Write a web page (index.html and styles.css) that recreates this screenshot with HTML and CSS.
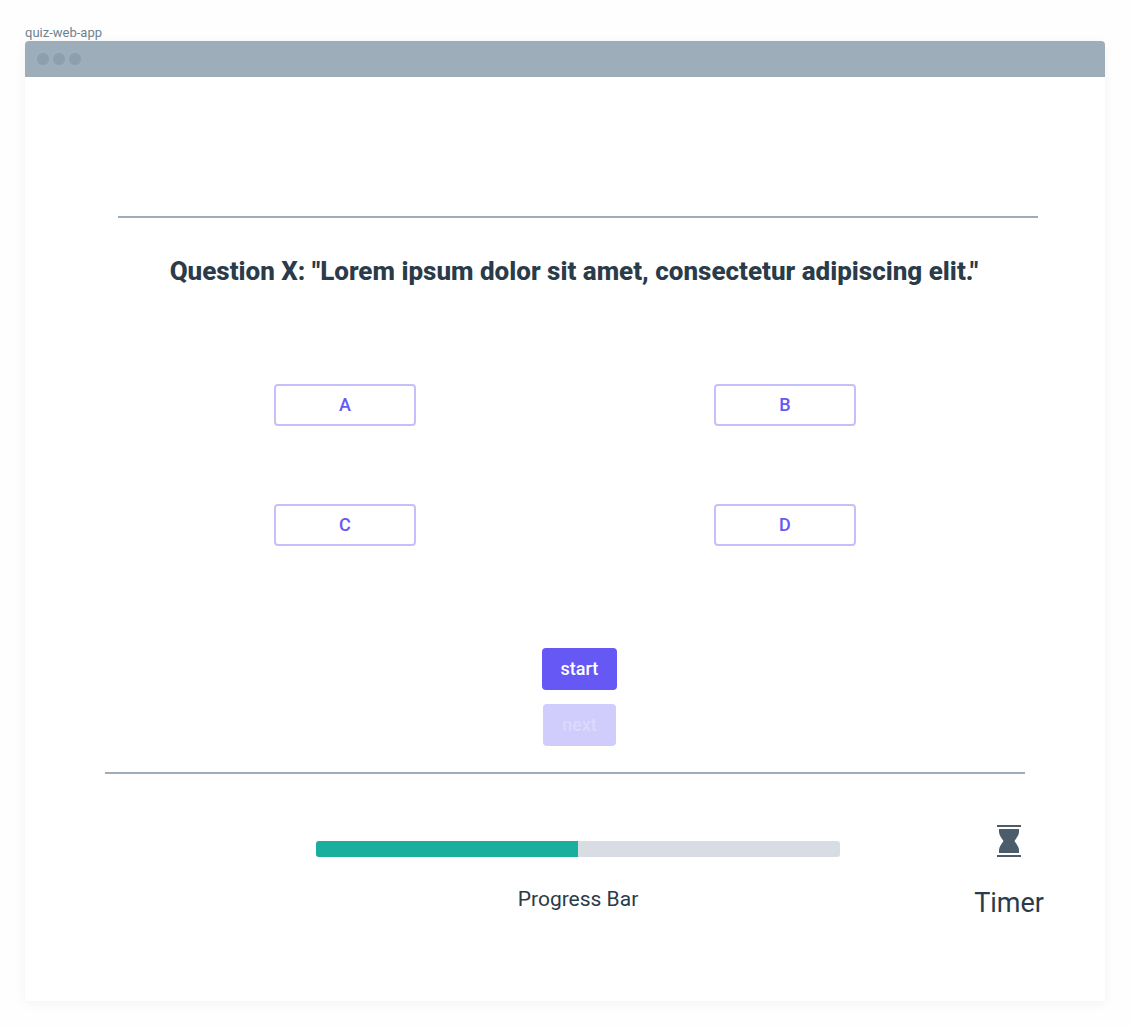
FILE: index.html
```html
<!DOCTYPE html>
<html lang="en">
<head>
<meta charset="utf-8">
<meta name="viewport" content="width=device-width, initial-scale=1">
<title>quiz-web-app</title>
<link rel="stylesheet" href="styles.css">
</head>
<body>
<div class="frame-name">quiz-web-app</div>
<div class="window">
  <div class="title-bar"><span class="dot"></span><span class="dot"></span><span class="dot"></span></div>
  <main class="quiz">
    <hr class="divider divider-top">
    <h1 class="question">Question X: "Lorem ipsum dolor sit amet, consectetur adipiscing elit."</h1>
    <div class="answers">
      <button class="answer" type="button">A</button>
      <button class="answer" type="button">B</button>
      <button class="answer" type="button">C</button>
      <button class="answer" type="button">D</button>
    </div>
    <div class="actions">
      <button class="action" type="button">start</button>
      <button class="action action-next" type="button" disabled>next</button>
    </div>
    <hr class="divider divider-bottom">
    <div class="status">
      <div class="progress-group">
        <progress class="progress" id="quiz-progress" value="50" max="100"></progress>
        <label class="progress-label" for="quiz-progress">Progress Bar</label>
      </div>
      <div class="timer">
        <svg class="hourglass" viewBox="0 0 24 32" aria-hidden="true">
          <path d="M0 0H24V2H0ZM0 30H24V32H0ZM2 4H22V7C22 10 19.500 13 17.500 16C19.500 19 22 22 22 25V28H2V25C2 22 4.500 19 6.500 16C4.500 13 2 10 2 7Z"/>
        </svg>
        <span class="timer-label">Timer</span>
      </div>
    </div>
  </main>
</div>
</body>
</html>
```

FILE: styles.css
```css
* {
  box-sizing: border-box;
}

body {
  margin: 0;
  padding: 25px;
  background: #fefefe;
  color: #2a3b49;
  font-family: Roboto, "Liberation Sans", sans-serif;
}

.frame-name {
  color: #6c8190;
  font-size: 13px;
  line-height: 16px;
}

.window {
  border-radius: 4px 4px 0 0;
  background: #fff;
  box-shadow: 0 2px 12px rgba(0, 0, 0, 0.05);
}

.title-bar {
  display: flex;
  align-items: center;
  gap: 4px;
  height: 36px;
  padding: 0 12px;
  border-radius: 4px 4px 0 0;
  background: #9eadba;
}

.dot {
  width: 12px;
  height: 12px;
  border-radius: 50%;
  background: #8d9eac;
}

.quiz {
  padding: 139px 0 82px;
}

.divider {
  height: 2px;
  border: 0;
  background: #9eadba;
}

.divider-top {
  margin: 0 67px 0 93px;
}

.divider-bottom {
  margin: 26px 80px 0;
}

.question {
  margin: 37px 70px 0 88px;
  font-size: 26px;
  font-weight: 800;
  line-height: 32px;
  text-align: center;
}

.answers {
  display: grid;
  grid-template-columns: 142px 142px;
  justify-content: center;
  gap: 78px 298px;
  margin-top: 97px;
}

.answer {
  height: 42px;
  padding: 0;
  border: 2px solid #c6c0fa;
  border-radius: 4px;
  background: #fff;
  color: #6558f5;
  font: 500 18px/24px Roboto, "Liberation Sans", sans-serif;
}

.actions {
  display: flex;
  flex-direction: column;
  align-items: center;
  gap: 14px;
  margin: 102px 65px 0 94px;
}

.action {
  height: 42px;
  padding: 0 19px;
  border: 0;
  border-radius: 4px;
  background: #6558f5;
  color: #fff;
  font: 500 18px/24px Roboto, "Liberation Sans", sans-serif;
}

.action-next {
  background: #d0ccfc;
  color: #ddd9fd;
}

.status {
  display: grid;
  grid-template-columns: 1fr minmax(0, 524px) 1fr;
  margin: 51px 54px 0 80px;
}

.progress-group {
  display: flex;
  grid-column: 2;
  flex-direction: column;
  align-items: center;
  gap: 30px;
  padding-top: 16px;
}

.progress {
  display: block;
  width: 100%;
  height: 16px;
  overflow: hidden;
  border: 0;
  border-radius: 3px;
  background: #d8dde4;
  appearance: none;
}

.progress::-webkit-progress-bar {
  background: #d8dde4;
}

.progress::-webkit-progress-value {
  background: #1aae9f;
}

.progress-label {
  font-size: 21px;
  line-height: 24px;
}

.timer {
  display: flex;
  flex-direction: column;
  align-items: center;
  justify-self: end;
  gap: 30px;
  padding-right: 7px;
}

.hourglass {
  width: 24px;
  height: 32px;
  fill: #4b5c6b;
}

.timer-label {
  font-size: 27px;
  line-height: 32px;
}
```
